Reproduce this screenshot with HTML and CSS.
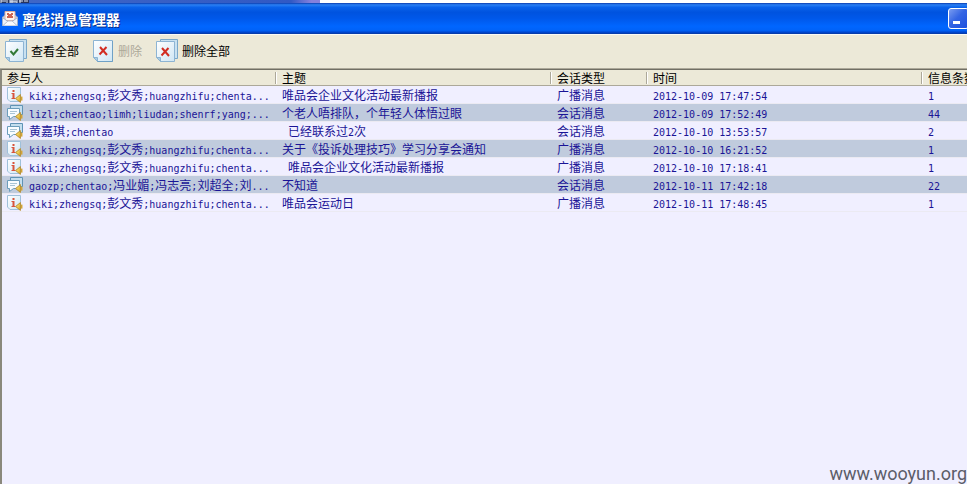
FILE: index.html
```
<!DOCTYPE html>
<html lang="zh-CN">
<head>
<meta charset="utf-8">
<title>离线消息管理器</title>
<link rel="stylesheet" href="styles.css">
</head>
<body>
<svg class="defs" aria-hidden="true">
  <defs>
    <linearGradient id="paper" x1="0" y1="0" x2="1" y2="1">
      <stop offset="0" stop-color="#ffffff"/><stop offset="1" stop-color="#cfe6f4"/>
    </linearGradient>
    <linearGradient id="gold" x1="0" y1="0" x2="1" y2="1">
      <stop offset="0" stop-color="#fff08a"/><stop offset="1" stop-color="#dba51c"/>
    </linearGradient>
    <symbol id="horn" viewBox="0 0 8 9">
      <path d="M.6 4.500 5.400.6v7.800z" fill="url(#gold)" stroke="#b5892a" stroke-width=".9"/>
      <path d="M6.700 2.600v4" stroke="#d3a434" stroke-width="1.500"/>
    </symbol>
    <symbol id="broadcast" viewBox="0 0 16 16">
      <path d="M.5.5h13v14H3l-2.500-2.500z" fill="url(#paper)" stroke="#9fc0da"/>
      <path d="M5.500 3h2v2h-2zM4.500 6h3v5h1v1h-4v-1h1V7h-1z" fill="#d8543c"/>
      <use href="#horn" x="8" y="7" width="8" height="9"/>
    </symbol>
    <symbol id="chat" viewBox="0 0 16 16">
      <path d="M3.500.5h12v9h-12z" fill="#c4deee" stroke="#5f93b5"/>
      <path d="M.5 3.500h12v8h-6l-4 3v-3h-2z" fill="#f8fcff" stroke="#6b9cbb"/>
      <path d="M3 6.500h7M3 8.500h5" stroke="#a9c5d6"/>
      <use href="#horn" x="8" y="7" width="8" height="9"/>
    </symbol>
    <symbol id="sheet" viewBox="0 0 22 24">
      <path d="M1.500 1.500h19v21h-15l-4-4z" fill="url(#paper)" stroke="#8db4d3"/>
      <path d="M1.500 18.500h4v4z" fill="#a9cde5" stroke="#8db4d3"/>
      <path d="M20.500 2v20.500h-15" fill="none" stroke="#6fa1c6"/>
    </symbol>
    <symbol id="sheets" viewBox="0 0 24 24">
      <path d="M5.500.5h17v19h-17z" fill="#c9e1f0" stroke="#7aa8ca"/>
      <path d="M1.500 2.500h18v20h-14l-4-4z" fill="url(#paper)" stroke="#8db4d3"/>
      <path d="M1.500 18.500h4v4z" fill="#a9cde5" stroke="#8db4d3"/>
    </symbol>
  </defs>
</svg>

<div class="backdrop" aria-hidden="true">
  <svg width="30" height="3" viewBox="0 0 30 3"><path d="M0 0h29v3H0z" fill="#27345c"/><path d="M1 0v3M1 1h5M7 0v3M10 0v3M10 1h6M12 0v3M17 0v3M19 1h4M20 0v3M25 0v2M27 0v2M10 2h7" stroke="#dfe6f5" fill="none"/></svg>
  <span class="backdrop-bar"></span>
</div>

<header class="titlebar">
  <svg class="title-icon" width="16" height="16" viewBox="0 0 16 16" aria-hidden="true">
    <path d="M.5 6 8 1l7.500 5v8.500H.5z" fill="#c7d7ed" stroke="#8faad3"/>
    <path d="M3 .5h10v9H3z" fill="#fff5ee" stroke="#dcae9f"/>
    <path d="M5 2h2v1h2V2h2v2h-1v1h1v2H5V5h1V4H5z" fill="#cc6554"/>
    <path d="M.5 6.500 6 10.500h4l5.500-4v8H.5z" fill="#eef3f9" stroke="#9db0cb"/>
    <path d="m1 14.500 5-4.500h4l5 4.500" fill="#f9fbfd" stroke="#b5c2d3"/>
  </svg>
  <h1>离线消息管理器</h1>
  <button class="minimize" type="button" aria-label="最小化"></button>
</header>

<nav class="toolbar">
  <button type="button">
    <svg width="24" height="24" viewBox="0 0 24 24" aria-hidden="true"><use href="#sheets"/><path d="m6.500 12 3 3.500 4.500-5.500" fill="none" stroke="#327a38" stroke-width="2"/></svg>
    <span>查看全部</span>
  </button>
  <button type="button" class="single" disabled>
    <svg width="22" height="24" viewBox="0 0 22 24" aria-hidden="true"><use href="#sheet"/><path d="m8 8 7 8M14.500 8l-7 7.500" fill="none" stroke="#d22d22" stroke-width="2"/></svg>
    <span>删除</span>
  </button>
  <button type="button">
    <svg width="24" height="24" viewBox="0 0 24 24" aria-hidden="true"><use href="#sheets"/><path d="m7 9 7 8M13.500 9l-7 7.500" fill="none" stroke="#d22d22" stroke-width="2"/></svg>
    <span>删除全部</span>
  </button>
</nav>

<main class="list">
  <table>
    <colgroup><col class="wide"><col class="wide"><col class="kind"><col class="wide"><col></colgroup>
    <thead>
      <tr><th>参与人</th><th>主题</th><th>会话类型</th><th>时间</th><th>信息条数</th></tr>
    </thead>
    <tbody>
      <tr>
        <td><div class="people"><svg width="16" height="16"><use href="#broadcast"/></svg><span><i>kiki;zhengsq;</i>彭文秀<i>;huangzhifu;chenta...</i></span></div></td>
        <td>唯品会企业文化活动最新播报</td><td>广播消息</td><td><i>2012-10-09 17:47:54</i></td><td><i>1</i></td>
      </tr>
      <tr>
        <td><div class="people"><svg width="16" height="16"><use href="#chat"/></svg><span><i>lizl;chentao;limh;liudan;shenrf;yang;...</i></span></div></td>
        <td>个老人唔排队，个年轻人体悟过眼</td><td>会话消息</td><td><i>2012-10-09 17:52:49</i></td><td><i>44</i></td>
      </tr>
      <tr>
        <td><div class="people"><svg width="16" height="16"><use href="#chat"/></svg><span>黄嘉琪<i>;chentao</i></span></div></td>
        <td class="spaced"><i> </i>已经联系过<i>2</i>次</td><td>会话消息</td><td><i>2012-10-10 13:53:57</i></td><td><i>2</i></td>
      </tr>
      <tr>
        <td><div class="people"><svg width="16" height="16"><use href="#broadcast"/></svg><span><i>kiki;zhengsq;</i>彭文秀<i>;huangzhifu;chenta...</i></span></div></td>
        <td>关于《投诉处理技巧》学习分享会通知</td><td>广播消息</td><td><i>2012-10-10 16:21:52</i></td><td><i>1</i></td>
      </tr>
      <tr>
        <td><div class="people"><svg width="16" height="16"><use href="#broadcast"/></svg><span><i>kiki;zhengsq;</i>彭文秀<i>;huangzhifu;chenta...</i></span></div></td>
        <td class="spaced"><i> </i>唯品会企业文化活动最新播报</td><td>广播消息</td><td><i>2012-10-10 17:18:41</i></td><td><i>1</i></td>
      </tr>
      <tr>
        <td><div class="people"><svg width="16" height="16"><use href="#chat"/></svg><span><i>gaozp;chentao;</i>冯业媚<i>;</i>冯志亮<i>;</i>刘超全<i>;</i>刘<i>...</i></span></div></td>
        <td>不知道</td><td>会话消息</td><td><i>2012-10-11 17:42:18</i></td><td><i>22</i></td>
      </tr>
      <tr>
        <td><div class="people"><svg width="16" height="16"><use href="#broadcast"/></svg><span><i>kiki;zhengsq;</i>彭文秀<i>;huangzhifu;chenta...</i></span></div></td>
        <td>唯品会运动日</td><td>广播消息</td><td><i>2012-10-11 17:48:45</i></td><td><i>1</i></td>
      </tr>
    </tbody>
  </table>
</main>
<div class="watermark">www.wooyun.org</div>
</body>
</html>
```
FILE: styles.css
```
* { box-sizing: border-box; }

body {
  margin: 0;
  min-height: 100vh;
  display: flex;
  flex-direction: column;
  position: relative;
  overflow: hidden;
  background: #f0efff;
  color: #000;
  font: 12px/16px "Noto Sans CJK SC", sans-serif;
}

.defs { position: absolute; width: 0; height: 0; }

.backdrop { display: flex; height: 3px; background: #fff; }
.backdrop svg { flex: none; background: #3c64c4; }
.backdrop-bar {
  width: 30%;
  background: linear-gradient(90deg, #3f66c6, #3159c4 90%, #8580dc 97%);
}

.titlebar {
  display: flex;
  align-items: center;
  gap: 4px;
  height: 31px;
  padding-left: 2px;
  overflow: hidden;
  background: linear-gradient(#0a3cae 0, #2a80f4 6%, #0a62ea 14%, #0053df 30%, #0058ea 50%, #0066ff 75%, #0062f8 88%, #0040c4 96%, #0a3a9c 100%);
}
.title-icon { flex: none; }
.titlebar h1 {
  flex: 1;
  margin: 0;
  color: #fff;
  font-size: 14px;
  line-height: 20px;
  font-weight: 700;
  text-shadow: 1px 1px 0 #0a2c86;
}
.minimize {
  position: relative;
  flex: none;
  width: 21px;
  height: 21px;
  margin-right: -2px;
  border: 1px solid #fff;
  border-radius: 3px;
  background: linear-gradient(135deg, #7a9cf0, #3465e4 45%, #1d50dd);
}
.minimize::after {
  content: "";
  position: absolute;
  left: 4px;
  bottom: 4px;
  width: 7px;
  height: 3px;
  background: #fff;
}

.toolbar {
  display: flex;
  align-items: center;
  gap: 13px;
  height: 35px;
  padding-left: 4px;
  padding-bottom: 2px;
  border-top: 1px solid #fbfaf5;
  border-bottom: 1px solid #aca899;
  background: #ece9d8;
}
.toolbar button {
  display: flex;
  align-items: center;
  gap: 3px;
  padding: 0;
  border: 0;
  background: none;
  color: #000;
  font: inherit;
}
.toolbar .single { gap: 4px; }
.toolbar button:disabled { color: #aca899; }

.list {
  flex: 1;
  overflow: hidden;
  border-top: 1px solid #716f64;
  border-left: 2px solid #8a887c;
}
table { width: 100%; table-layout: fixed; border-collapse: separate; border-spacing: 0; }
.wide { width: 275px; }
.kind { width: 96px; }
th, td {
  padding: 0 0 0 5px;
  white-space: nowrap;
  text-align: left;
  font-weight: 400;
}
th {
  height: 16px;
  line-height: 15px;
  border-bottom: 1px solid #aca899;
  background: linear-gradient(90deg, transparent calc(100% - 2px), #aca899 0, #aca899 calc(100% - 1px), #fff 0) 0 2px / 100% 12px no-repeat #ece9d8;
}
th:last-child { background: #ece9d8; }
td {
  height: 18px;
  line-height: 16px;
  border-bottom: 1px solid #ebeaf2;
  color: #1a1496;
}
tr:nth-child(even) td { background: #c0cbdd; }
td i { font: 10px/10px "DejaVu Sans Mono", monospace; }
.spaced i { white-space: pre; }
.people { display: flex; align-items: center; gap: 6px; height: 17px; }
.people svg { flex: none; }

.watermark {
  position: absolute;
  right: 0;
  bottom: 0;
  color: #5c5d69;
  font: 18px/20px Roboto, sans-serif;
}
```
